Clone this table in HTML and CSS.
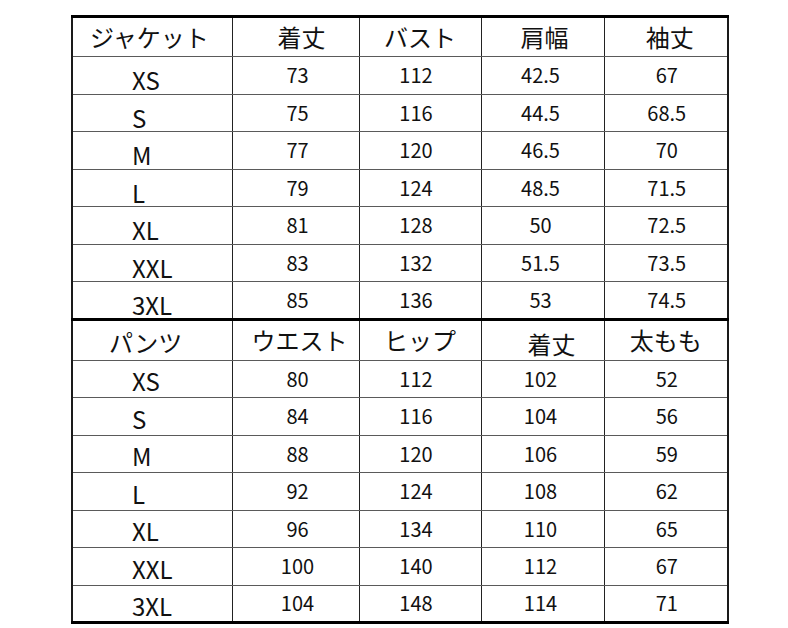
FILE: index.html
```html
<!DOCTYPE html>
<html lang="ja">
<head>
<meta charset="utf-8">
<title>サイズ表</title>
<link rel="stylesheet" href="styles.css">
</head>
<body>
<div class="page">
<table class="sizes">
  <colgroup>
    <col class="c1"><col class="c2"><col class="c3"><col class="c4"><col class="c5">
  </colgroup>
  <tbody>
    <tr class="head top">
      <th class="h-jacket">ジャケット</th>
      <th class="h-nudge6">着丈</th>
      <th>バスト</th>
      <th class="h-nudge2">肩幅</th>
      <th class="h-nudge4">袖丈</th>
    </tr>
    <tr class="row"><td class="size">XS</td><td class="n2">73</td><td class="n3">112</td><td class="n4">42.5</td><td class="n5">67</td></tr>
    <tr class="row"><td class="size">S</td><td class="n2">75</td><td class="n3">116</td><td class="n4">44.5</td><td class="n5">68.5</td></tr>
    <tr class="row"><td class="size">M</td><td class="n2">77</td><td class="n3">120</td><td class="n4">46.5</td><td class="n5">70</td></tr>
    <tr class="row"><td class="size">L</td><td class="n2">79</td><td class="n3">124</td><td class="n4">48.5</td><td class="n5">71.5</td></tr>
    <tr class="row"><td class="size">XL</td><td class="n2">81</td><td class="n3">128</td><td class="n4">50</td><td class="n5">72.5</td></tr>
    <tr class="row"><td class="size">XXL</td><td class="n2">83</td><td class="n3">132</td><td class="n4">51.5</td><td class="n5">73.5</td></tr>
    <tr class="row last"><td class="size">3XL</td><td class="n2">85</td><td class="n3">136</td><td class="n4">53</td><td class="n5">74.5</td></tr>
    <tr class="head pants">
      <th class="h-pants">パンツ</th>
      <th class="h-nudge4">ウエスト</th>
      <th>ヒップ</th>
      <th class="h-nudge9 h-low">着丈</th>
      <th>太もも</th>
    </tr>
    <tr class="row prow"><td class="size">XS</td><td class="n2">80</td><td class="n3">112</td><td class="n4">102</td><td class="n5">52</td></tr>
    <tr class="row prow"><td class="size">S</td><td class="n2">84</td><td class="n3">116</td><td class="n4">104</td><td class="n5">56</td></tr>
    <tr class="row prow"><td class="size">M</td><td class="n2">88</td><td class="n3">120</td><td class="n4">106</td><td class="n5">59</td></tr>
    <tr class="row prow"><td class="size">L</td><td class="n2">92</td><td class="n3">124</td><td class="n4">108</td><td class="n5">62</td></tr>
    <tr class="row prow"><td class="size">XL</td><td class="n2">96</td><td class="n3">134</td><td class="n4">110</td><td class="n5">65</td></tr>
    <tr class="row prow"><td class="size">XXL</td><td class="n2">100</td><td class="n3">140</td><td class="n4">112</td><td class="n5">67</td></tr>
    <tr class="row prow last"><td class="size">3XL</td><td class="n2">104</td><td class="n3">148</td><td class="n4">114</td><td class="n5">71</td></tr>
  </tbody>
</table>
</div>
</body>
</html>
```

FILE: styles.css
```css
html, body {
  margin: 0;
  padding: 0;
  background: #ffffff;
}

.page {
  padding: 15px 0 0 71px;
  font-family: "Noto Sans CJK JP", "Noto Sans", sans-serif;
  color: #111111;
}

.sizes {
  border-collapse: collapse;
  table-layout: fixed;
  width: 656px;
  border-left: 2px solid #1a1a1a;
  border-right: 2px solid #1a1a1a;
  border-top: 3px solid #000;
  border-bottom: 3px solid #000;
}

.c1 { width: 160px; }
.c2 { width: 127px; }
.c3 { width: 122px; }
.c4 { width: 123px; }
.c5 { width: 124px; }

.sizes th,
.sizes td {
  padding: 0;
  border-left: 1px solid #222;
  border-bottom: 1px solid #5a5a5a;
  text-align: center;
  vertical-align: middle;
  line-height: 1;
  white-space: nowrap;
}

.sizes th {
  font-weight: 400;
  font-size: 24px;
}

.top { height: 40px; }
.pants { height: 41px; }

.pants th { border-top: 3px solid #000; }

.row { height: 37.5px; }

.row td { font-size: 20px; }

.sizes .size {
  text-align: left;
  padding-left: 59px;
  padding-top: 10px;
  font-size: 24px;
}

.sizes .prow .size { padding-top: 5px; }

.last td { border-bottom: none; }

.sizes .h-jacket { text-align: left; padding-left: 17px; }
.sizes .h-pants { text-align: left; padding-left: 36px; padding-top: 4px; }
.sizes .h-nudge2 { padding-left: 4px; }
.sizes .h-nudge4 { padding-left: 8px; }
.sizes .h-nudge6 { padding-left: 12px; }
.sizes .h-nudge9 { padding-left: 18px; }
.sizes .h-low { padding-top: 8px; }

.sizes .n2 { padding-left: 4px; }
.sizes .n3 { padding-right: 8px; }
.sizes .n4 { padding-right: 4px; }
.sizes .n5 { padding-left: 2px; }
```
